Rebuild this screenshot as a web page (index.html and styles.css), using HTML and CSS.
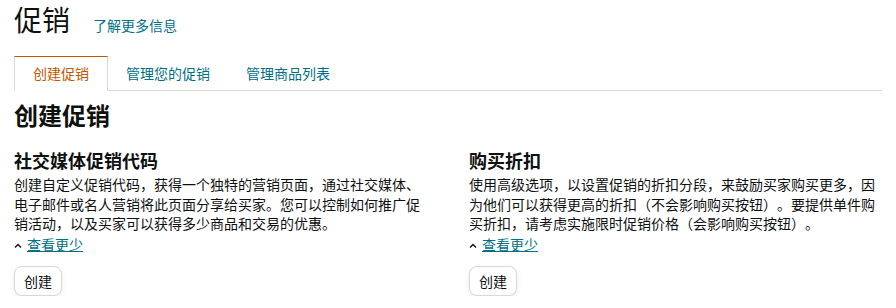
FILE: index.html
```html
<!DOCTYPE html>
<html lang="zh-CN">
<head>
<meta charset="utf-8">
<link rel="stylesheet" href="styles.css">
</head>
<body>
<div class="page">
  <div class="header">
    <h1 class="title">促销</h1>
    <a class="link header-link" href="#">了解更多信息</a>
  </div>
  <div class="tabs">
    <div class="tab active">创建促销</div>
    <div class="tab">管理您的促销</div>
    <div class="tab">管理商品列表</div>
    <div class="tab-fill"></div>
  </div>
  <h2 class="section-title">创建促销</h2>
  <div class="columns">
    <div class="card">
      <h3 class="card-title">社交媒体促销代码</h3>
      <p class="card-text">创建自定义促销代码，获得一个独特的营销页面，通过社交媒体、电子邮件或名人营销将此页面分享给买家。您可以控制如何推广促销活动，以及买家可以获得多少商品和交易的优惠。</p>
      <div class="toggle"><svg class="caret" width="8" height="8" viewBox="0 0 8 8"><polyline points="1,5.5 4,2.5 7,5.5" fill="none" stroke="#0f1111" stroke-width="1.4"/></svg><a class="link under" href="#">查看更少</a></div>
      <button class="btn">创建</button>
    </div>
    <div class="card">
      <h3 class="card-title">购买折扣</h3>
      <p class="card-text">使用高级选项，以设置促销的折扣分段，来鼓励买家购买更多，因为他们可以获得更高的折扣（不会影响购买按钮）。要提供单件购买折扣，请考虑实施限时促销价格（会影响购买按钮）。</p>
      <div class="toggle"><svg class="caret" width="8" height="8" viewBox="0 0 8 8"><polyline points="1,5.5 4,2.5 7,5.5" fill="none" stroke="#0f1111" stroke-width="1.4"/></svg><a class="link under" href="#">查看更少</a></div>
      <button class="btn">创建</button>
    </div>
  </div>
</div>
</body>
</html>
```
FILE: styles.css
```css
* { box-sizing: border-box; }
html, body { margin: 0; padding: 0; background: #fff; }
body {
  font-family: "Noto Sans CJK SC", "Noto Sans", "Liberation Sans", sans-serif;
  color: #0f1111;
  font-size: 14px;
  text-spacing-trim: space-all;
}
.page { padding: 0 14px; }
.header {
  display: flex;
  align-items: baseline;
  height: 38px;
}
.title {
  margin: 0;
  font-size: 28px;
  line-height: 38px;
  font-weight: 400;
}
.link { color: #007185; text-decoration: none; }
.header-link { margin-left: 23px; font-size: 14px; }
.tabs {
  display: flex;
  margin-top: 18px;
  height: 35px;
}
.tab {
  padding: 0 18px;
  line-height: 33px;
  border-top: 1px solid transparent;
  color: #007185;
  border-bottom: 1px solid #d5d9d9;
}
.tab.active {
  color: #c45500;
  border: 1px solid #d5d9d9;
  border-top: 1px solid #c45500;
  border-bottom: 1px solid #fff;
}
.tab-fill { flex: 1; border-bottom: 1px solid #d5d9d9; }
.section-title {
  margin: 9px 0 0;
  font-size: 24px;
  line-height: 30px;
  font-weight: 700;
}
.columns {
  display: grid;
  grid-template-columns: 1fr 1fr;
  column-gap: 42px;
  margin-top: 18px;
}
.card-title {
  margin: 0;
  font-size: 18px;
  line-height: 24px;
  font-weight: 700;
}
.card-text {
  margin: 3px 0 0;
  line-height: 19.5px;
}
.toggle {
  display: flex;
  align-items: center;
  line-height: 20px;
}
.caret { margin: 4px 5px 0 0; }
.under { text-decoration: underline; }
.btn {
  display: block;
  margin-top: 12px;
  height: 30px;
  width: 48px;
  padding: 0;
  font-family: inherit;
  font-size: 14px;
  color: #0f1111;
  background: #fff;
  border: 1px solid #d5d9d9;
  border-radius: 8px;
  box-shadow: 0 2px 5px rgba(213,217,217,0.5);
}
```
